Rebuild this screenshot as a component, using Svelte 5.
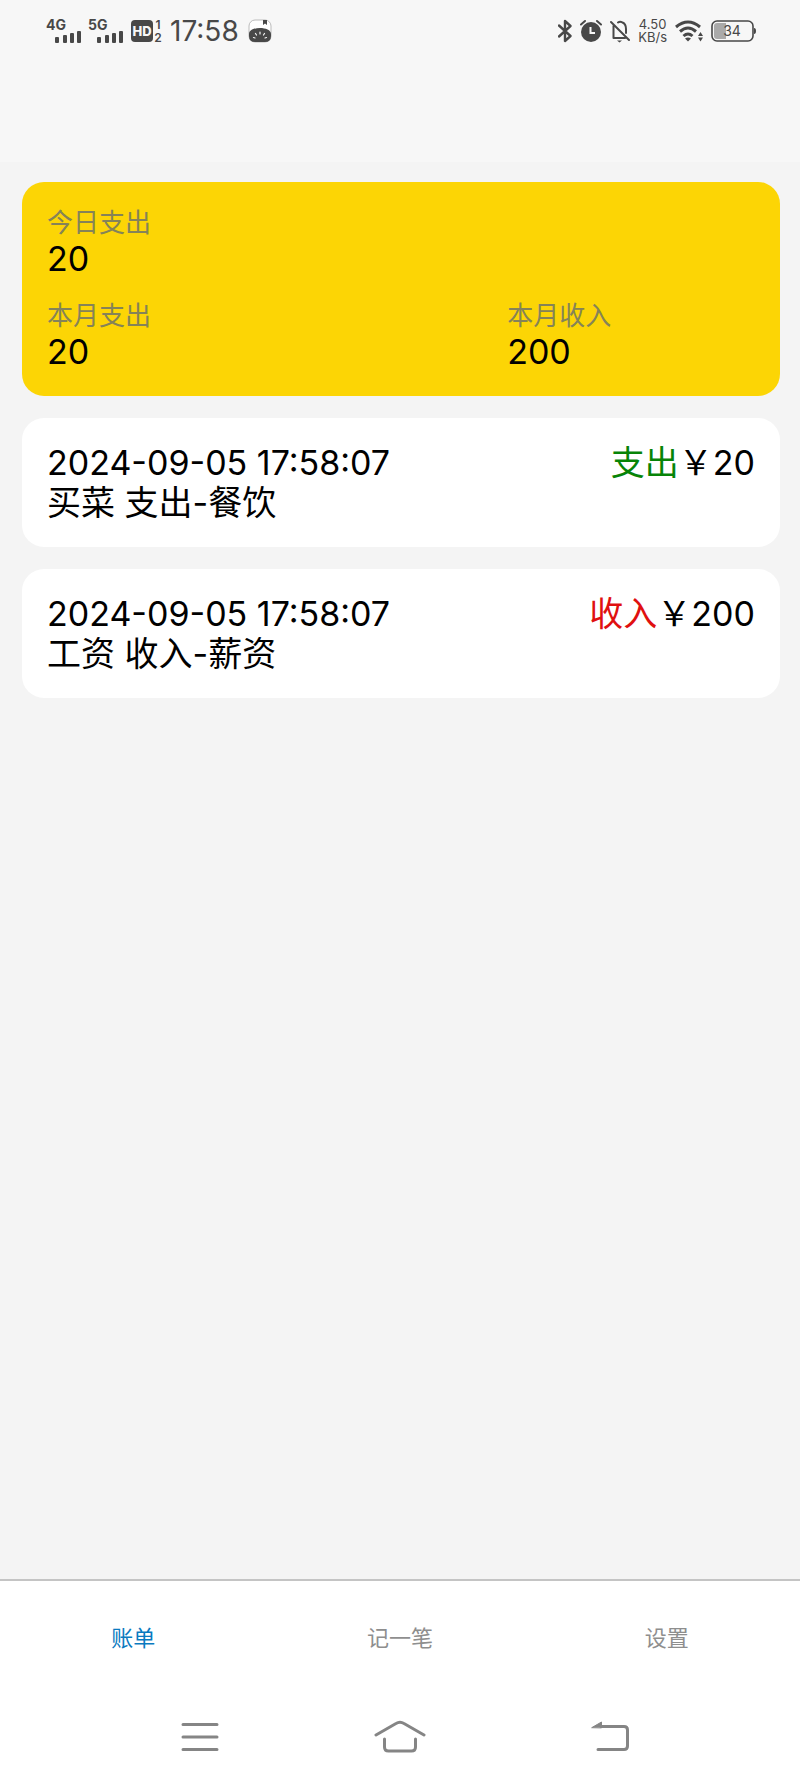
<script lang="ts">
	interface Bill {
		time: string;
		name: string;
		type: '支出' | '收入';
		category: string;
		amount: number;
	}

	const networks = ['4G', '5G'];
	const tabs = ['账单', '记一笔', '设置'];

	const bills: Bill[] = [
		{ time: '2024-09-05 17:58:07', name: '买菜', type: '支出', category: '餐饮', amount: 20 },
		{ time: '2024-09-05 17:58:07', name: '工资', type: '收入', category: '薪资', amount: 200 }
	];

	let activeTab = $state('账单');

	function total(type: Bill['type']) {
		return bills.filter((bill) => bill.type === type).reduce((sum, bill) => sum + bill.amount, 0);
	}
</script>

<div class="app">
	<div class="status-bar">
		<div class="status-left">
			{#each networks as network}
				<svg class="signal" width="36" height="30" viewBox="0 0 36 30">
					<text x="0" y="14" font-size="14" font-weight="700">{network}</text>
					<rect x="9" y="21" width="4" height="6" rx="1" />
					<rect x="17" y="19" width="4" height="8" rx="1" />
					<rect x="24" y="17" width="4" height="10" rx="1" />
					<rect x="31" y="15" width="4" height="12" rx="1" />
				</svg>
			{/each}
			<svg class="hd" width="34" height="26" viewBox="0 0 34 26">
				<rect x="1" y="2" width="22" height="22" rx="4" />
				<text x="12" y="18" font-size="13" font-weight="800" fill="#f7f7f7" text-anchor="middle">HD</text>
				<text x="28" y="11" font-size="12" font-weight="600" text-anchor="middle">1</text>
				<text x="28" y="24" font-size="12" font-weight="600" text-anchor="middle">2</text>
			</svg>
			<span class="clock">17:58</span>
			<svg width="24" height="26" viewBox="0 0 24 26">
				<rect x="1" y="2" width="22" height="22" rx="6" fill="#fff" stroke="#bbb" />
				<path d="M15 2h4v5l-2-1.500-2 1.500z" />
				<path d="M1 16C1 8 23 8 23 16v2q0 6-6 6H7q-6 0-6-6z" />
				<path
					d="M12 14v2M7.500 15.500l1 1.500M16.500 15.500l-1 1.500M5.500 19.500l1.500 .5M18.500 19.500l-1.500 .5"
					stroke="#f7f7f7"
					stroke-width="1.200"
					stroke-linecap="round"
				/>
			</svg>
		</div>

		<div class="status-right">
			<svg width="14" height="24" viewBox="0 0 14 24">
				<path class="line" d="M1 6.500l11.500 10.500L7 22V2l5.500 5L1 17.500" stroke-width="2.400" />
			</svg>
			<svg width="22" height="24" viewBox="0 0 22 24">
				<circle cx="11" cy="13" r="10" />
				<path class="line" d="M1 5.500l4-3.500M21 5.500L17 2" stroke-width="2" />
				<path d="M10.500 8v6H15" fill="none" stroke="#f7f7f7" stroke-width="2" />
			</svg>
			<svg width="20" height="24" viewBox="0 0 20 24">
				<path class="line" d="M3.500 7v12H15M8 3.500Q10 2 12.500 3.500 16 5 16 10v4M1 3l18 18" stroke-width="2" />
				<path d="M7 21.500h5l-2.500 2z" />
			</svg>
			<span class="speed">4.50<br />KB/s</span>
			<svg width="28" height="24" viewBox="0 0 28 24">
				<g fill="none" stroke="#484848" stroke-width="3">
					<path d="M1 8Q13 -2 25 8" />
					<path d="M5 12.500Q13 5.500 21 12.500" />
					<path d="M8.500 17Q13 13 17.500 17" />
				</g>
				<path d="M10 19.500Q13 17.500 16 19.500L13 22.500z" />
				<path d="M25.500 13l2.500 4h-5zM25.500 22.500l2.500-4h-5z" />
			</svg>
			<svg class="battery" width="45" height="24" viewBox="0 0 45 24">
				<rect x="1" y="2" width="41" height="20" rx="5" fill="none" stroke="#484848" stroke-width="1.600" />
				<path d="M15 4H6q-3 0-3 3v10q0 3 3 3h9z" fill="#aaa" />
				<path d="M43 9q2 0 2 3t-2 3z" />
				<text x="21" y="17" font-size="14" text-anchor="middle">34</text>
			</svg>
		</div>
	</div>

	<header class="header"></header>

	<main class="content">
		<section class="summary">
			<div class="stat today">
				<span class="stat-label">今日支出</span>
				<span class="stat-value">{total('支出')}</span>
			</div>
			<div class="stat">
				<span class="stat-label">本月支出</span>
				<span class="stat-value">{total('支出')}</span>
			</div>
			<div class="stat">
				<span class="stat-label">本月收入</span>
				<span class="stat-value">{total('收入')}</span>
			</div>
		</section>

		{#each bills as bill}
			<article class="bill">
				<div class="bill-row">
					<time>{bill.time}</time>
					<span class="amount"><span class={bill.type === '支出' ? 'expense' : 'income'}>{bill.type}</span>&#xFFE5;{bill.amount}</span>
				</div>
				<div class="bill-desc">{bill.name} {bill.type}-{bill.category}</div>
			</article>
		{/each}
	</main>

	<nav class="tabs">
		{#each tabs as tab}
			<button class="tab" class:active={activeTab === tab} onclick={() => (activeTab = tab)}>{tab}</button>
		{/each}
	</nav>

	<div class="system-nav">
		<button aria-label="Recent apps">
			<svg width="38" height="34" viewBox="0 0 38 34">
				<path d="M2 4.500h34M2 17h34M2 29.500h34" />
			</svg>
		</button>
		<button aria-label="Home">
			<svg width="54" height="34" viewBox="0 0 54 34">
				<path d="M3 15L23 3.500Q27 1 31 3.500L51 15" />
				<path d="M11.500 19v8q0 4 4 4h23q4 0 4-4v-8" />
			</svg>
		</button>
		<button aria-label="Back">
			<svg width="58" height="34" viewBox="-20 0 58 34">
				<path d="M10 6.500h23q3.500 0 3.500 3.500v16q0 3.500-3.500 3.500H7" />
				<path d="M1 7.500L10.500 2v5.500z" fill="#858585" stroke-width="1" />
			</svg>
		</button>
	</div>
</div>

<style>
	:global(body) {
		margin: 0;
	}

	.app {
		display: flex;
		flex-direction: column;
		min-height: 100vh;
		background: #f4f4f4;
		color: #000;
		font-family: Inter, 'Noto Sans CJK SC', sans-serif;
	}

	button {
		padding: 0;
		border: none;
		background: none;
		font: inherit;
	}

	svg {
		display: block;
		flex-shrink: 0;
	}

	.status-bar {
		display: flex;
		justify-content: space-between;
		align-items: center;
		height: 62px;
		padding: 0 44px 0 46px;
		background: #f7f7f7;
		color: #484848;
	}

	.status-bar svg {
		fill: #484848;
	}

	.status-bar .line {
		fill: none;
		stroke: #484848;
		stroke-linecap: round;
		stroke-linejoin: round;
	}

	.status-left,
	.status-right {
		display: flex;
		align-items: center;
	}

	.status-left {
		gap: 6px;
	}

	.status-right {
		gap: 8px;
	}

	.clock {
		font-size: 28px;
		line-height: 32px;
		margin-right: 3px;
	}

	.speed {
		font-size: 13px;
		line-height: 13px;
		text-align: center;
	}

	.header {
		height: 100px;
		background: #f7f7f7;
	}

	.content {
		display: flex;
		flex: 1;
		flex-direction: column;
		gap: 22px;
		padding: 20px 20px 20px 22px;
	}

	.summary {
		display: grid;
		grid-template-columns: 65fr 35fr;
		row-gap: 21px;
		padding: 25px 25px 24px;
		border-radius: 22px;
		background: #fcd505;
	}

	.stat {
		display: flex;
		flex-direction: column;
	}

	.today {
		grid-column: 1 / -1;
	}

	.stat-label {
		font-size: 26px;
		line-height: 32px;
		color: #858358;
	}

	.stat-value {
		font-size: 34px;
		line-height: 40px;
	}

	.bill {
		padding: 25px 25px 24px;
		border-radius: 22px;
		background: #fff;
		font-size: 34px;
		line-height: 40px;
	}

	.bill-row {
		display: flex;
		justify-content: space-between;
	}

	.expense {
		color: #078407;
	}

	.income {
		color: #e01010;
	}

	.tabs {
		display: grid;
		grid-template-columns: repeat(3, 1fr);
		height: 114px;
		border-top: 2px solid #c4c4c4;
		background: #fff;
	}

	.tab {
		font-size: 22px;
		line-height: 32px;
		color: #8e8e8e;
	}

	.tab.active {
		color: #0a7abf;
	}

	.system-nav {
		display: grid;
		grid-template-columns: repeat(3, 25%);
		justify-content: center;
		justify-items: center;
		align-items: center;
		height: 84px;
		padding-bottom: 5px;
		background: #fff;
	}

	.system-nav svg {
		fill: none;
		stroke: #858585;
		stroke-width: 3;
		stroke-linecap: round;
		stroke-linejoin: round;
	}
</style>
